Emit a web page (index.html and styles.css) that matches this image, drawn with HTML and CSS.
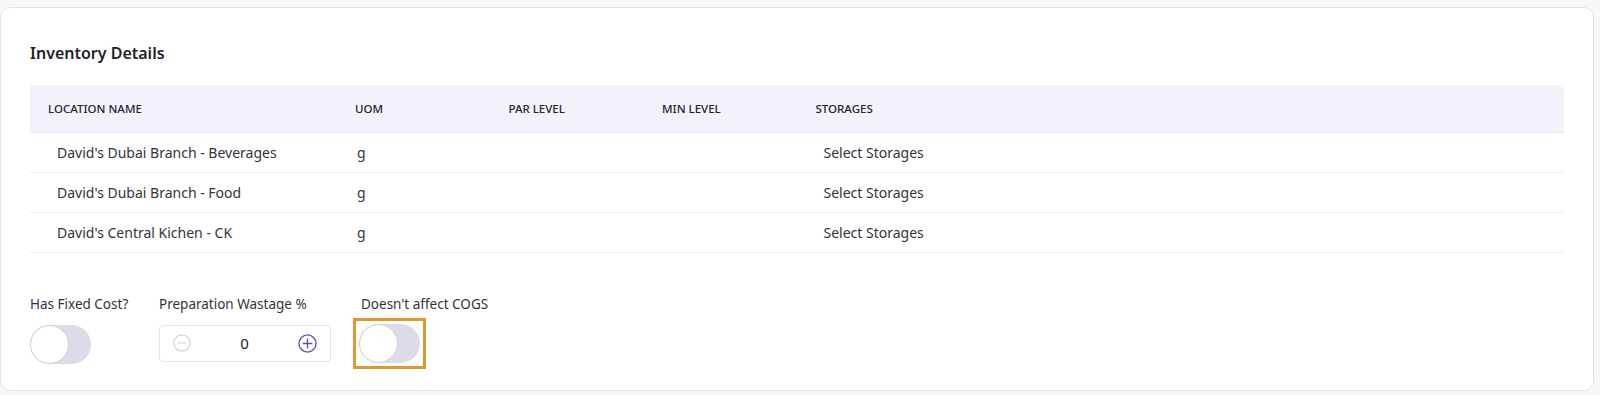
FILE: index.html
```html
<!DOCTYPE html>
<html lang="en">
<head>
  <meta charset="UTF-8" />
  <meta name="viewport" content="width=device-width, initial-scale=1.0" />
  <title>Inventory Details</title>
  <link rel="stylesheet" href="styles.css">
</head>
<body>
  <div class="card">
    <h2 class="card-title">Inventory Details</h2>

    <table class="inv-table">
      <colgroup>
        <col class="col-name">
        <col class="col-sm">
        <col class="col-sm">
        <col class="col-sm">
        <col>
      </colgroup>
      <thead>
        <tr>
          <th>Location Name</th>
          <th>UOM</th>
          <th>Par Level</th>
          <th>Min Level</th>
          <th>Storages</th>
        </tr>
      </thead>
      <tbody>
        <tr>
          <td class="cell-name">David's Dubai Branch - Beverages</td>
          <td class="cell-uom">g</td>
          <td></td>
          <td></td>
          <td class="cell-store">Select Storages</td>
        </tr>
        <tr>
          <td class="cell-name">David's Dubai Branch - Food</td>
          <td class="cell-uom">g</td>
          <td></td>
          <td></td>
          <td class="cell-store">Select Storages</td>
        </tr>
        <tr>
          <td class="cell-name">David's Central Kichen - CK</td>
          <td class="cell-uom">g</td>
          <td></td>
          <td></td>
          <td class="cell-store">Select Storages</td>
        </tr>
      </tbody>
    </table>

    <div class="options">
      <div class="field field-first">
        <label class="field-label">Has Fixed Cost?</label>
        <span class="toggle"><span class="knob"></span></span>
      </div>

      <div class="field">
        <label class="field-label">Preparation Wastage %</label>
        <div class="stepper">
          <svg class="step-btn minus" viewBox="0 0 20 20" width="18" height="18">
            <circle cx="10" cy="10" r="9" fill="none" stroke="currentColor" stroke-width="1.3"/>
            <path d="M5.5 10h9" stroke="currentColor" stroke-width="1.3" stroke-linecap="round"/>
          </svg>
          <span class="step-value">0</span>
          <svg class="step-btn plus" viewBox="0 0 20 20" width="19" height="19">
            <circle cx="10" cy="10" r="9" fill="none" stroke="currentColor" stroke-width="1.4"/>
            <path d="M5.5 10h9M10 5.5v9" stroke="currentColor" stroke-width="1.4" stroke-linecap="round"/>
          </svg>
        </div>
      </div>

      <div class="field field-cogs">
        <label class="field-label">Doesn't affect COGS</label>
        <span class="focus-ring"><span class="toggle"><span class="knob"></span></span></span>
      </div>
    </div>
  </div>
</body>
</html>
```

FILE: styles.css
```css
* {
  box-sizing: border-box;
}
body {
  margin: 0;
  padding: 7px 6px 4px 0;
  background: #f7f7fa;
  font-family: 'Noto Sans', 'Open Sans', sans-serif;
  color: #2e2e36;
}

.card {
  background: #fff;
  border: 1px solid #e3e3ea;
  border-radius: 10px;
  padding: 35px 29px 22px 29px;
  height: 384px;
}

.card-title {
  margin: 0 0 22px;
  font-size: 16px;
  line-height: 20px;
  font-weight: 600;
  color: #1e1e28;
}

.inv-table {
  width: 100%;
  border-collapse: collapse;
  table-layout: fixed;
}
.col-name { width: 307px; }
.col-sm { width: 153.5px; }

.inv-table th {
  background: #f3f2fa;
  height: 47px;
  padding: 0 0 0 18px;
  text-align: left;
  text-transform: uppercase;
  font-size: 11.5px;
  font-weight: 500;
  color: #24242e;
  border-bottom: 1px solid #e8e7f0;
}

.inv-table td {
  height: 40px;
  padding: 0 0 0 18px;
  font-size: 14px;
  color: #33333b;
  border-bottom: 1px solid #ececf1;
}
.inv-table td.cell-name { padding-left: 27px; }
.inv-table td.cell-uom { padding-left: 20px; }
.inv-table td.cell-store { padding-left: 26px; }

.options {
  display: flex;
  align-items: flex-start;
  gap: 28px;
  margin-top: 42px;
}

.field {
  display: flex;
  flex-direction: column;
  align-items: flex-start;
}
.field-first { min-width: 101px; }

.field-label {
  font-size: 13.5px;
  line-height: 18px;
  color: #33333b;
  margin-bottom: 12px;
}
.field-cogs .field-label { margin-left: 2px; }

.toggle {
  display: block;
  position: relative;
  width: 61px;
  height: 39px;
  border-radius: 20px;
  background: #dcdce8;
}
.toggle .knob {
  position: absolute;
  left: 0;
  top: 0;
  width: 39px;
  height: 39px;
  border-radius: 50%;
  background: #fff;
  border: 1.5px solid #cfcfdc;
}

.focus-ring {
  display: block;
  margin-top: -1px;
  outline: 3px solid #e2972f;
  outline-offset: 3px;
}

.stepper {
  width: 172px;
  height: 37px;
  border: 1px solid #e3e3ea;
  border-radius: 4px;
  display: flex;
  align-items: center;
  justify-content: space-between;
  padding: 0 13px 0 13px;
}
.step-btn.minus { color: #d3d3db; }
.step-btn.plus { color: #5a4cb2; }
.step-value {
  font-size: 15px;
  color: #222;
}
```
